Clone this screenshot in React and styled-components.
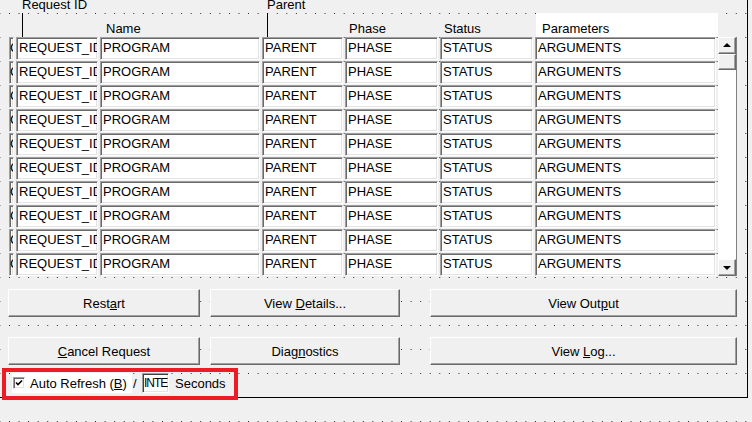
import React from "react";
import styled, { createGlobalStyle } from "styled-components";

const GlobalStyle = createGlobalStyle`
  html, body {
    margin: 0;
    padding: 0;
  }
  body {
    width: 752px;
    height: 422px;
    overflow: hidden;
    background-color: #f0f0f0;
    background-image: conic-gradient(from 270deg at 1px 1px, #2a2a2a 90deg, transparent 0);
    background-size: 9.57px 24px;
    background-position: 9px 13px;
    font-family: "Liberation Sans", Arial, sans-serif;
    font-size: 13px;
    color: #000;
  }
`;

const COLS = "5px 82px 160px 81px 93px 93px 181px";

const Canvas = styled.div`
  position: relative;
  width: 747px;
  height: 397px;
  border-right: 1px solid #000;
  border-bottom: 1px solid #000;
`;

const TopLabels = styled.div`
  display: grid;
  grid-template-columns: ${COLS};
  column-gap: 2px;
  padding-left: 9px;
  height: 13px;
  line-height: 10px;
  white-space: nowrap;
`;

const HeaderRow = styled.div`
  display: grid;
  grid-template-columns: ${COLS};
  column-gap: 2px;
  padding-left: 9px;
  height: 24px;
  white-space: nowrap;
`;

const Label = styled.div`
  grid-column: ${(p) => p.$col};
  padding-left: ${(p) => p.$pad}px;
`;

const BottomLabel = styled(Label)`
  align-self: end;
  line-height: 15px;
  padding-bottom: 1px;
`;

const Tick = styled.div`
  grid-column: ${(p) => p.$col};
  margin-left: ${(p) => p.$pad}px;
  width: 1px;
  height: 24px;
  background: #000;
`;

const ParamHead = styled.div`
  grid-column: 7;
  margin-left: 1px;
  width: 182px;
  box-sizing: border-box;
  padding-left: 6px;
  background: #fff;
  display: flex;
  align-items: flex-end;
  line-height: 15px;
  padding-bottom: 1px;
`;

const TableBody = styled.div`
  display: flex;
  gap: 2px;
  padding-left: 9px;
`;

const Rows = styled.div`
  display: flex;
  flex-direction: column;
  gap: 1px;
`;

const Row = styled.div`
  display: grid;
  grid-template-columns: ${COLS};
  column-gap: 2px;
  height: 23px;
`;

const Cell = styled.div`
  box-sizing: border-box;
  height: 23px;
  background: #fff;
  border-top: 1px solid #a0a0a0;
  border-left: 1px solid #a0a0a0;
  border-bottom: 1px solid #fff;
  border-right: 1px solid #fff;
  box-shadow: inset 1px 1px 0 #696969, inset -1px -1px 0 #e3e3e3;
  padding: 1px 0 0 ${(p) => (p.$tiny ? 0 : 2)}px;
  line-height: 17px;
  white-space: nowrap;
  overflow: hidden;
`;

const ScrollBar = styled.div`
  box-sizing: border-box;
  width: 19px;
  height: 239px;
  background: #fff;
  border-right: 1px solid #808080;
  display: flex;
  flex-direction: column;
  justify-content: space-between;
`;

const ScrollTop = styled.div`
  display: flex;
  flex-direction: column;
`;

const ScrollBtn = styled.div`
  box-sizing: border-box;
  width: 18px;
  height: ${(p) => p.$h}px;
  background: #f0f0f0;
  border-top: 1px solid #fff;
  border-left: 1px solid #fff;
  border-right: 1px solid #696969;
  border-bottom: 1px solid #696969;
  box-shadow: inset -1px -1px 0 #a0a0a0;
  display: flex;
  align-items: center;
  justify-content: center;
`;

const Arrow = styled.div`
  width: 0;
  height: 0;
  border-left: 4px solid transparent;
  border-right: 4px solid transparent;
  ${(p) =>
    p.$down
      ? "border-top: 4px solid #000; margin-top: 1px;"
      : "border-bottom: 4px solid #000; margin-bottom: 1px;"}
`;

const ButtonRow = styled.div`
  display: flex;
  gap: 10px;
  padding-left: 8px;
  margin-top: ${(p) => p.$mt}px;
`;

const Btn = styled.button`
  box-sizing: border-box;
  width: ${(p) => p.$w}px;
  height: 28px;
  margin: 0 0 0 ${(p) => p.$push || 0}px;
  padding: 0;
  background: #f0f0f0;
  font-family: "Liberation Sans", Arial, sans-serif;
  font-size: 13px;
  color: #000;
  border-top: 1px solid #fff;
  border-left: 1px solid #fff;
  border-right: 1px solid #696969;
  border-bottom: 1px solid #696969;
  box-shadow: inset -1px -1px 0 #a0a0a0;
  outline: none;
`;

const RefreshRow = styled.div`
  display: flex;
  align-items: center;
  padding-left: 12px;
  margin-top: 8px;
  height: 20px;
  white-space: nowrap;
`;

const CheckWrap = styled.div`
  box-sizing: border-box;
  width: 120px;
  height: 20px;
  background: #fff;
  display: flex;
  align-items: center;
  padding-left: 1px;
  gap: 5px;
`;

const CheckBox = styled.div`
  box-sizing: border-box;
  width: 12px;
  height: 12px;
  background: #fff;
  border-top: 1px solid #a0a0a0;
  border-left: 1px solid #a0a0a0;
  border-bottom: 1px solid #fff;
  border-right: 1px solid #fff;
  box-shadow: inset 1px 1px 0 #696969, inset -1px -1px 0 #e3e3e3;
  display: flex;
  align-items: center;
  justify-content: center;
`;

const Slash = styled.span`
  width: 10px;
  padding-left: 1px;
  box-sizing: border-box;
`;

const Field = styled.div`
  box-sizing: border-box;
  width: 27px;
  height: 20px;
  background: #fff;
  border-top: 1px solid #a0a0a0;
  border-left: 1px solid #a0a0a0;
  border-bottom: 1px solid #fff;
  border-right: 1px solid #fff;
  box-shadow: inset 1px 1px 0 #404040, inset -1px -1px 0 #e3e3e3;
  padding-left: 1px;
  font-size: 12px;
  letter-spacing: -1px;
  line-height: 18px;
  overflow: hidden;
  white-space: nowrap;
`;

const Seconds = styled.span`
  margin-left: 6px;
`;

const Highlight = styled.div`
  position: absolute;
  left: 2px;
  top: 368px;
  width: 236px;
  height: 32px;
  box-sizing: border-box;
  border: 4px solid #ed1c24;
  pointer-events: none;
`;

const ROWS = Array.from({ length: 10 }, () => ({
  flag: "C",
  id: "REQUEST_ID",
  program: "PROGRAM",
  parent: "PARENT",
  phase: "PHASE",
  status: "STATUS",
  args: "ARGUMENTS",
}));

export default function App() {
  return (
    <>
      <GlobalStyle />
      <Canvas>
        <TopLabels>
          <Label $col={2} $pad={6}>Request ID</Label>
          <Label $col={4} $pad={5}>Parent</Label>
        </TopLabels>
        <HeaderRow>
          <Tick $col={2} $pad={6} />
          <BottomLabel $col={3} $pad={6}>Name</BottomLabel>
          <Tick $col={4} $pad={5} />
          <BottomLabel $col={5} $pad={4}>Phase</BottomLabel>
          <BottomLabel $col={6} $pad={4}>Status</BottomLabel>
          <ParamHead>Parameters</ParamHead>
        </HeaderRow>
        <TableBody>
          <Rows>
            {ROWS.map((r, i) => (
              <Row key={i}>
                <Cell $tiny>{r.flag}</Cell>
                <Cell>{r.id}</Cell>
                <Cell>{r.program}</Cell>
                <Cell>{r.parent}</Cell>
                <Cell>{r.phase}</Cell>
                <Cell>{r.status}</Cell>
                <Cell>{r.args}</Cell>
              </Row>
            ))}
          </Rows>
          <ScrollBar>
            <ScrollTop>
              <ScrollBtn $h={17}>
                <Arrow />
              </ScrollBtn>
              <ScrollBtn $h={16} />
            </ScrollTop>
            <ScrollBtn $h={17}>
              <Arrow $down />
            </ScrollBtn>
          </ScrollBar>
        </TableBody>
        <ButtonRow $mt={13}>
          <Btn $w={192}>
            Rest<u>a</u>rt
          </Btn>
          <Btn $w={190}>
            View <u>D</u>etails...
          </Btn>
          <Btn $w={307} $push={20}>
            View Out<u>p</u>ut
          </Btn>
        </ButtonRow>
        <ButtonRow $mt={20}>
          <Btn $w={192}>
            <u>C</u>ancel Request
          </Btn>
          <Btn $w={190}>
            Diag<u>n</u>ostics
          </Btn>
          <Btn $w={307} $push={20}>
            View <u>L</u>og...
          </Btn>
        </ButtonRow>
        <RefreshRow>
          <CheckWrap>
            <CheckBox>
              <svg width="8" height="8" viewBox="0 0 8 8">
                <path d="M1 3.5 L3 5.5 L7 1.5" fill="none" stroke="#000" strokeWidth="1.6" />
              </svg>
            </CheckBox>
            <span>
              Auto Refresh (<u>B</u>)
            </span>
          </CheckWrap>
          <Slash>/</Slash>
          <Field>INTE</Field>
          <Seconds>Seconds</Seconds>
        </RefreshRow>
        <Highlight />
      </Canvas>
    </>
  );
}
